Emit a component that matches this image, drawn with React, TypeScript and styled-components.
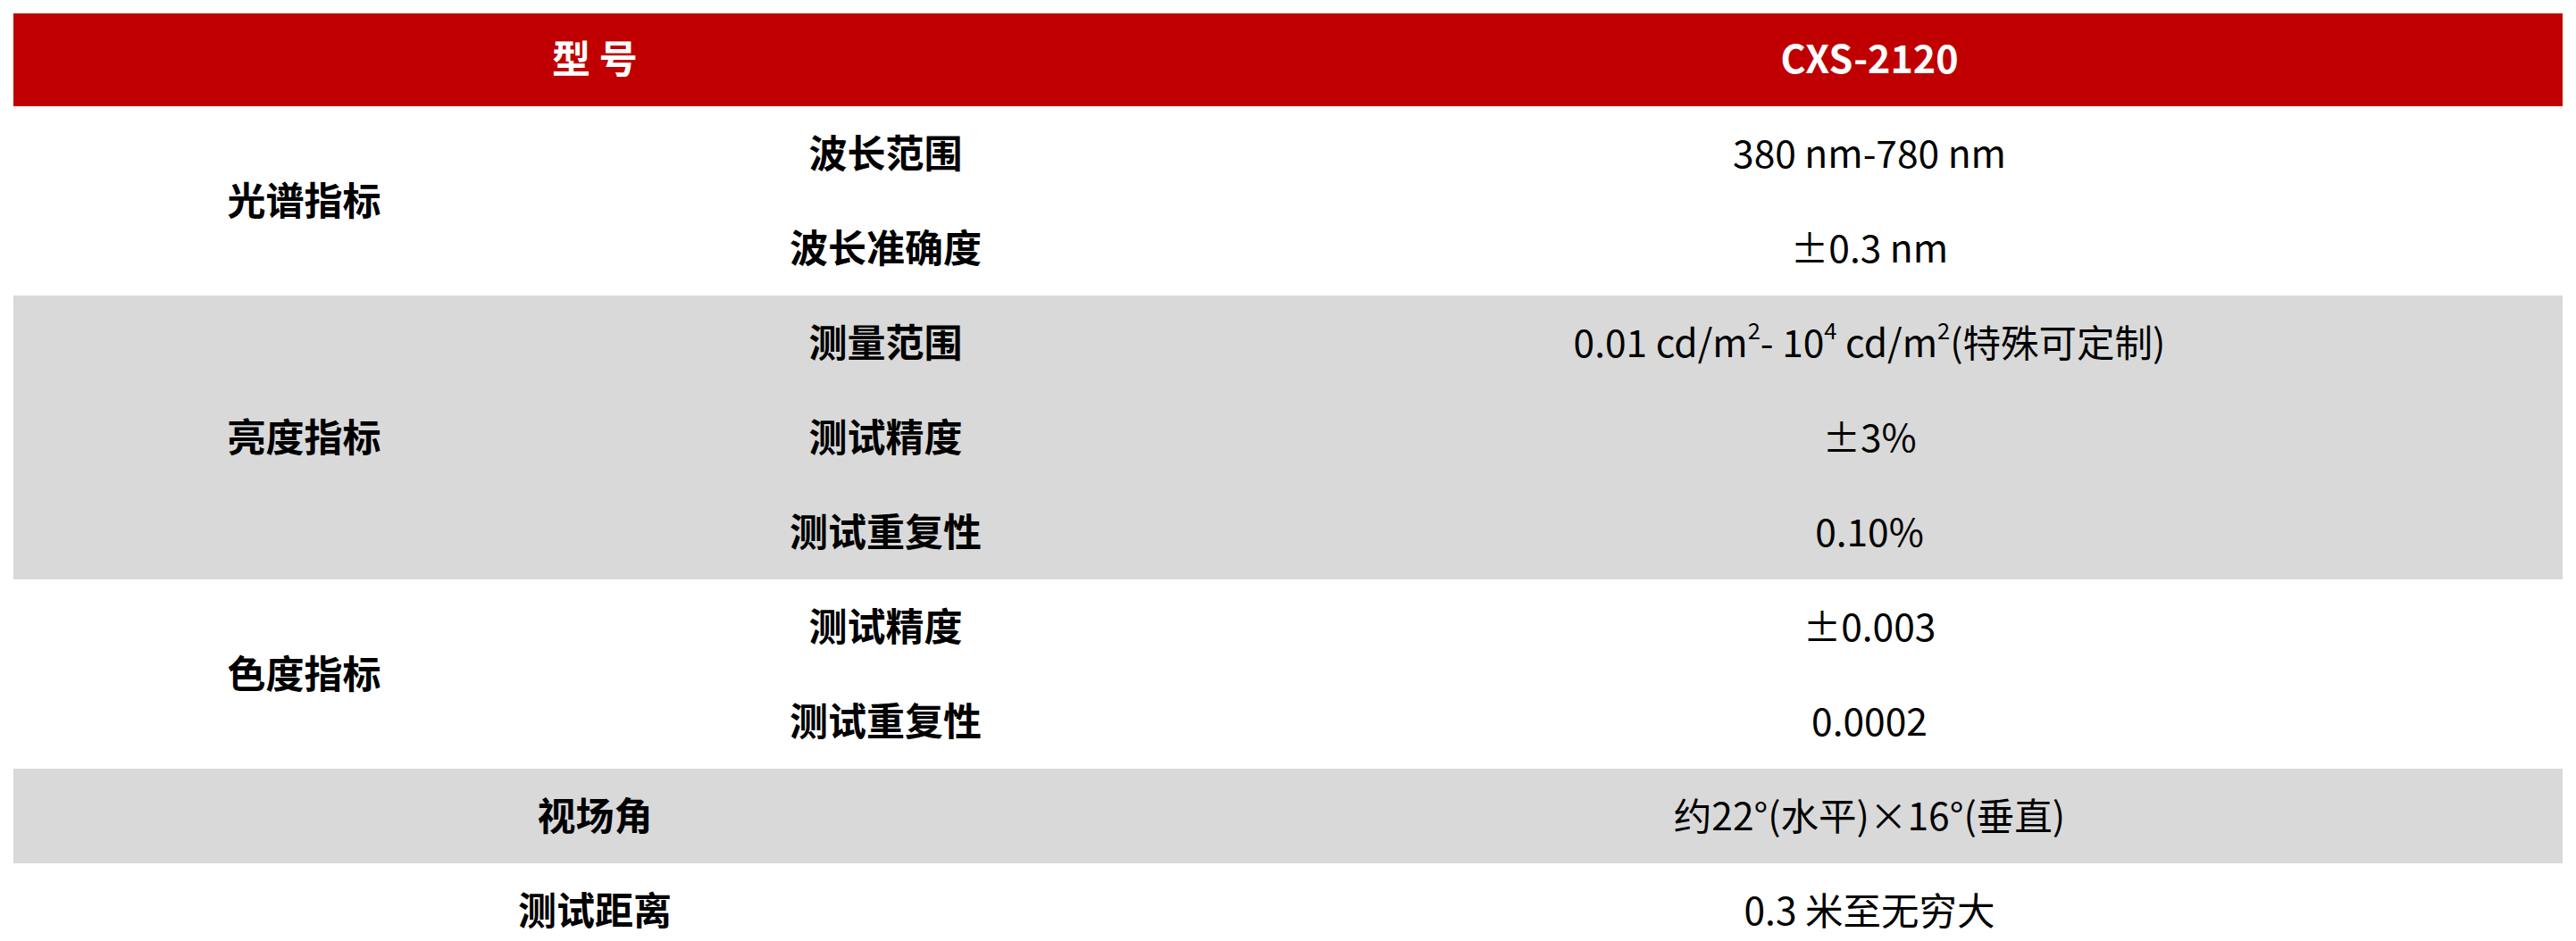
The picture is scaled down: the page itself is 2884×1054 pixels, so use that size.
import React from "react";
import styled, { createGlobalStyle } from "styled-components";

const GlobalStyle = createGlobalStyle`
  html, body {
    margin: 0;
    padding: 0;
    background: #fff;
  }
  body {
    font-family: "Noto Sans CJK SC", "Noto Sans", sans-serif;
    color: #000;
  }
`;

const Table = styled.div`
  margin: 15px;
  display: grid;
  grid-template-columns: 651px 651px 1fr;
  grid-template-rows: 104px;
  grid-auto-rows: 106px;
`;

const HeadCell = styled.div<{ $cols?: number }>`
  grid-column: span ${(p) => p.$cols || 1};
  background: #c00000;
  color: #fff;
  font-weight: 700;
  font-size: 43px;
  display: flex;
  align-items: center;
  justify-content: center;
  padding-bottom: 8px;
`;

const Cell = styled.div<{ $shade?: boolean; $rows?: number; $cols?: number; $bold?: boolean }>`
  grid-row: span ${(p) => p.$rows || 1};
  grid-column: span ${(p) => p.$cols || 1};
  background: ${(p) => (p.$shade ? "#d9d9d9" : "#fff")};
  font-weight: ${(p) => (p.$bold ? 700 : 400)};
  font-size: ${(p) => (p.$bold ? "43px" : "42.5px")};
  display: flex;
  align-items: center;
  justify-content: center;
  padding-bottom: 6px;
  white-space: pre;
`;

const Sup = styled.sup`
  font-size: 0.6em;
  line-height: 0;
  vertical-align: 0.8em;
`;

type Item = { name: string; value: React.ReactNode };
type Group = { title: string; shade: boolean; items: Item[] };

const groups: Group[] = [
  {
    title: "光谱指标",
    shade: false,
    items: [
      { name: "波长范围", value: "380 nm-780 nm" },
      { name: "波长准确度", value: "±0.3 nm" },
    ],
  },
  {
    title: "亮度指标",
    shade: true,
    items: [
      {
        name: "测量范围",
        value: (
          <span>
            {"0.01 cd/m"}
            <Sup>2</Sup>
            {"- 10"}
            <Sup>4</Sup>
            {" cd/m"}
            <Sup>2</Sup>
            {"(特殊可定制)"}
          </span>
        ),
      },
      { name: "测试精度", value: "±3%" },
      { name: "测试重复性", value: "0.10%" },
    ],
  },
  {
    title: "色度指标",
    shade: false,
    items: [
      { name: "测试精度", value: "±0.003" },
      { name: "测试重复性", value: "0.0002" },
    ],
  },
];

const singles = [
  { name: "视场角", value: "约22°(水平)×16°(垂直)", shade: true },
  { name: "测试距离", value: "0.3 米至无穷大", shade: false },
];

export default function App() {
  return (
    <>
      <GlobalStyle />
      <Table>
        <HeadCell $cols={2}>型 号</HeadCell>
        <HeadCell>CXS-2120</HeadCell>
        {groups.map((g) => (
          <React.Fragment key={g.title}>
            <Cell $shade={g.shade} $rows={g.items.length} $bold>
              {g.title}
            </Cell>
            {g.items.map((it, i) => (
              <React.Fragment key={i}>
                <Cell $shade={g.shade} $bold>
                  {it.name}
                </Cell>
                <Cell $shade={g.shade}>{it.value}</Cell>
              </React.Fragment>
            ))}
          </React.Fragment>
        ))}
        {singles.map((s) => (
          <React.Fragment key={s.name}>
            <Cell $shade={s.shade} $cols={2} $bold>
              {s.name}
            </Cell>
            <Cell $shade={s.shade}>{s.value}</Cell>
          </React.Fragment>
        ))}
      </Table>
    </>
  );
}
